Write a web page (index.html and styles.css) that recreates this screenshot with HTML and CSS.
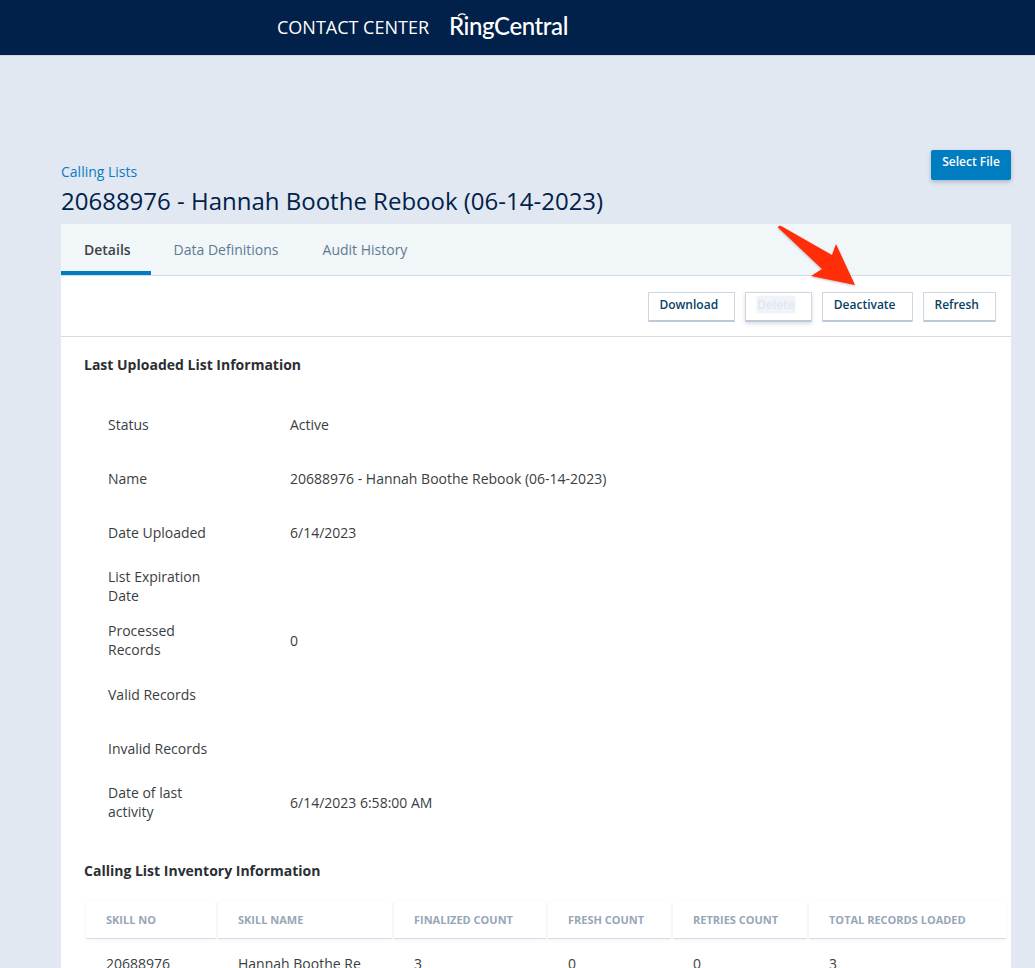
FILE: index.html
```html
<!DOCTYPE html>
<html lang="en">
<head>
<meta charset="utf-8">
<title>Calling Lists</title>
<link rel="stylesheet" href="styles.css">
</head>
<body>
<header class="topbar">
  <span class="product">CONTACT CENTER</span>
  <span class="logo">RingCentral<svg class="logo-arc" width="10" height="5" viewBox="0 0 10 5"><path d="M1 4.2C2.5 1.6 6 1.2 8.6 3" fill="none" stroke="#fff" stroke-width="1.3"/></svg></span>
</header>
<main class="page">
  <div class="title-row">
    <div>
      <a class="crumb">Calling Lists</a>
      <h1 class="title">20688976 - Hannah Boothe Rebook (06-14-2023)</h1>
    </div>
    <button class="btn-primary">Select File</button>
  </div>
  <section class="panel">
    <nav class="tabs">
      <span class="tab tab-active">Details</span>
      <span class="tab">Data Definitions</span>
      <span class="tab">Audit History</span>
    </nav>
    <div class="toolbar">
      <button class="btn btn-first">Download</button>
      <button class="btn btn-disabled"><span class="ghost">Delete</span></button>
      <button class="btn">Deactivate</button>
      <button class="btn">Refresh</button>
    </div>
    <div class="content">
      <h2 class="section">Last Uploaded List Information</h2>
      <dl class="details">
        <dt>Status</dt><dd>Active</dd>
        <dt>Name</dt><dd>20688976 - Hannah Boothe Rebook (06-14-2023)</dd>
        <dt>Date Uploaded</dt><dd>6/14/2023</dd>
        <dt>List Expiration Date</dt><dd></dd>
        <dt>Processed Records</dt><dd>0</dd>
        <dt>Valid Records</dt><dd></dd>
        <dt>Invalid Records</dt><dd></dd>
        <dt>Date of last activity</dt><dd>6/14/2023 6:58:00 AM</dd>
      </dl>
      <h2 class="section section-two">Calling List Inventory Information</h2>
      <div class="table">
        <div class="th">SKILL NO</div>
        <div class="th">SKILL NAME</div>
        <div class="th">FINALIZED COUNT</div>
        <div class="th">FRESH COUNT</div>
        <div class="th">RETRIES COUNT</div>
        <div class="th">TOTAL RECORDS LOADED</div>
        <div class="td">20688976</div>
        <div class="td">Hannah Boothe Re</div>
        <div class="td">3</div>
        <div class="td">0</div>
        <div class="td">0</div>
        <div class="td">3</div>
      </div>
    </div>
  </section>
</main>
<svg class="arrow" width="90" height="70" viewBox="0 0 90 70">
  <path d="M3 3.5C3.5 1.5 5 1.5 7 2.5L57 31 61 20 80 61 36 52 47 45 3 3.5Z" fill="#ff2d08"/>
</svg>
</body>
</html>
```
FILE: styles.css
```css
* { box-sizing: border-box; }
html, body { margin: 0; height: 968px; overflow: hidden; }
body {
  position: relative;
  background: #e1e8f2;
  font-family: "Open Sans", "Noto Sans", sans-serif;
  font-size: 14px;
  color: #2b2f33;
}
.topbar {
  height: 56px;
  background: #02214a;
  border-bottom: 1px solid #cfd8e4;
  padding: 0 0 2px 277px;
  display: flex;
  align-items: center;
  gap: 20px;
  color: #fff;
}
.product { font-size: 18px; letter-spacing: 0; }
.logo {
  position: relative;
  top: -1px;
  font-family: "Lato", sans-serif;
  font-size: 24px;
  font-weight: 500;
  letter-spacing: -0.4px;
}
.logo-arc { position: absolute; left: 8px; top: 1px; }
.page { padding: 94px 24px 0 61px; }
.title-row { display: flex; justify-content: space-between; align-items: flex-start; height: 74px; }
.crumb { display: block; margin-top: 12px; color: #0a7cc1; font-size: 14px; line-height: 19px; }
.title { margin: 3px 0 0; font-size: 24px; font-weight: 400; line-height: 33px; color: #02214a; }
.btn-primary {
  width: 80px;
  height: 30px;
  border: 0;
  border-radius: 2px;
  padding: 0 0 8px;
  background: #007cc0;
  color: #fff;
  font: 600 12px "Open Sans", sans-serif;
  box-shadow: 0 2px 4px rgba(2, 33, 74, .25);
}
.panel { background: #fff; height: 760px; }
.tabs {
  height: 52px;
  background: #f1f6f9;
  border-bottom: 1px solid #d3dde8;
  display: flex;
  color: #5f7b92;
}
.tab { padding: 16px 20px 0 23px; height: 51px; line-height: 19px; }
.tab + .tab { padding: 16px 21px 0 23px; }
.tab-active { color: #3d4247; font-weight: 600; border-bottom: 4px solid #007cc0; }
.toolbar {
  height: 61px;
  border-bottom: 1px solid #d3dde8;
  padding: 16px 15px 0 0;
  display: flex;
  justify-content: flex-end;
  gap: 10px;
}
.btn {
  height: 30px;
  padding: 0 16px 5px 11px;
  background: #fff;
  border: 1px solid #cdd7e3;
  border-bottom: 2px solid #bcc9d8;
  border-radius: 1px;
  color: #073f66;
  font: 600 12px "Open Sans", sans-serif;
}
.btn-first { padding-left: 10px; }
.btn-disabled { box-shadow: 0 2px 4px rgba(2, 33, 74, .15); }
.ghost {
  display: inline-block;
  background: #f0f4f9;
  color: #dfe7f1;
  box-shadow: 0 0 3px #f0f4f9;
}
.content { padding: 0 5px 0 23px; }
.section { margin: 0; padding-top: 18px; font-size: 14px; font-weight: 700; line-height: 19px; color: #2b2f33; }
.section-two { padding-top: 32px; }
.details {
  margin: 23px 0 0 24px;
  display: grid;
  grid-template-columns: 182px 1fr;
  grid-auto-rows: 54px;
  align-items: center;
  line-height: 19px;
  color: #3a3e42;
}
.details dt { width: 108px; }
.details dd { margin: 0; }
.table {
  margin: 21px 0 0 2px;
  display: grid;
  grid-template-columns: 130px 174px 152px 123px 134px 197px;
  column-gap: 2px;
}
.th {
  height: 38px;
  padding: 11px 0 0 20px;
  background: #fff;
  border-bottom: 1px solid #cfdcec;
  box-shadow: 0 1px 4px rgba(2, 33, 74, .05);
  font-size: 11px;
  font-weight: 700;
  line-height: 15px;
  color: #97a6b6;
}
.td { padding: 15px 0 0 20px; line-height: 19px; color: #3a3e42; }
.arrow { position: absolute; left: 775px; top: 224px; filter: drop-shadow(0 1px 1px rgba(0,0,0,.25)); }
```
